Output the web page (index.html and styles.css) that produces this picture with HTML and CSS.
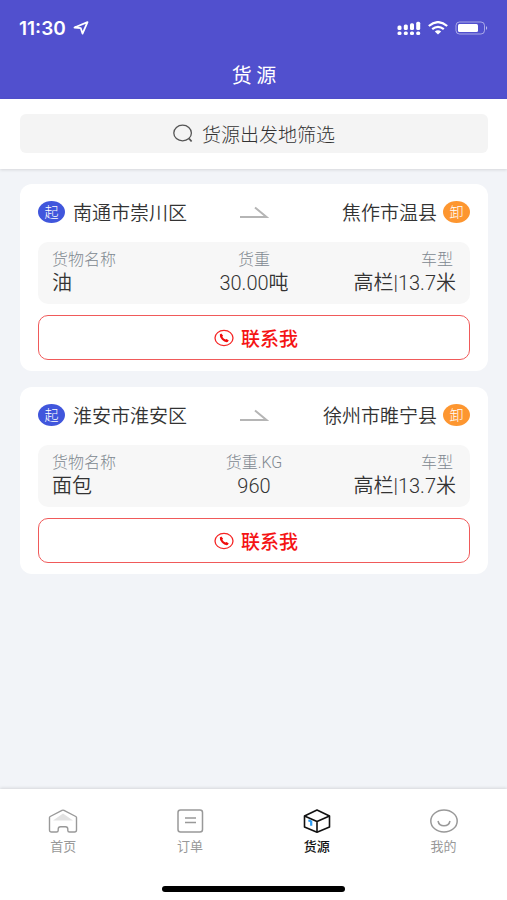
FILE: index.html
```
<!DOCTYPE html>
<html lang="zh-CN">
<head>
    <meta charset="UTF-8">
    <meta name="viewport" content="width=device-width, initial-scale=1.0">
    <title>货源</title>
    <link rel="stylesheet" href="styles.css">
</head>
<body>
    <header class="header">
        <div class="status">
            <span class="time">11:30</span>
            <svg class="locate" width="16" height="14" viewBox="0 0 16 14">
                <path d="M1.5 6.5L14.5 1.2L9.5 12.6L7.8 7.2Z" fill="none" stroke="#fff" stroke-width="1.8" stroke-linejoin="round"/>
            </svg>
            <svg width="24" height="14" viewBox="0 0 24 14" fill="#fff">
                <rect x="0.5" y="4.5" width="4" height="4.5" rx="1.5"/>
                <rect x="6.8" y="3.5" width="4" height="5.5" rx="1.5"/>
                <rect x="13" y="2.2" width="4" height="6.8" rx="1.5"/>
                <rect x="19.2" y="0.8" width="4" height="8.2" rx="1.5"/>
                <rect x="0.5" y="10.5" width="4" height="3.5" rx="1.5"/>
                <rect x="6.8" y="10.5" width="4" height="3.5" rx="1.5"/>
                <rect x="13" y="10.5" width="4" height="3.5" rx="1.5"/>
                <rect x="19.2" y="10.5" width="4" height="3.5" rx="1.5"/>
            </svg>
            <svg width="20" height="14" viewBox="0 0 20 14" fill="none" stroke="#fff" stroke-width="2.2">
                <path d="M0.8 5Q10 -2.8 19.2 5"/>
                <path d="M4.2 8.2Q10 3.4 15.8 8.2"/>
                <path d="M6.8 10.4Q10 8 13.2 10.4L10 13.4Z" fill="#fff" stroke="none"/>
            </svg>
            <svg width="34" height="14" viewBox="0 0 34 14">
                <rect x="1" y="1" width="28.5" height="12" rx="3.5" fill="none" stroke="#fff" stroke-opacity="0.5"/>
                <rect x="3" y="3" width="20" height="8" rx="1.5" fill="#fff"/>
                <path d="M31 5Q33.4 7 31 9Z" fill="#fff" fill-opacity="0.6"/>
            </svg>
        </div>
        <h1>货 源</h1>
    </header>

    <div class="filter">
        <button class="filter-button">
            <svg width="20" height="19" viewBox="0 0 20 19" fill="none" stroke="#555" stroke-width="1.3">
                <ellipse cx="9.6" cy="9" rx="8.8" ry="7.9"/>
                <path d="M16 14.5L18.6 17.5" stroke-width="1.8"/>
            </svg>
            货源出发地筛选
        </button>
    </div>

    <main class="list">
        <article class="card">
            <div class="route">
                <div class="place"><span class="badge start">起</span>南通市崇川区</div>
                <svg width="30" height="14" viewBox="0 0 30 14" fill="none" stroke="#b5b5b5" stroke-width="2">
                    <path d="M1 12H27.5L16 2.5"/>
                </svg>
                <div class="place end">焦作市温县<span class="badge unload">卸</span></div>
            </div>
            <dl class="info">
                <div>
                    <dt>货物名称</dt>
                    <dd>油</dd>
                </div>
                <div>
                    <dt>货重</dt>
                    <dd>30.00吨</dd>
                </div>
                <div>
                    <dt>车型</dt>
                    <dd>高栏|13.7米</dd>
                </div>
            </dl>
            <button class="contact">
                <svg width="20" height="18" viewBox="0 0 20 18">
                    <ellipse cx="10" cy="9" rx="9" ry="7.6" fill="none" stroke="#f52525" stroke-width="1.3"/>
                    <path d="M5.8 5.6L7.3 4.5L9.1 6.8L8.3 7.8Q9.5 9.7 11.5 10.6L12.6 9.9L14.8 11.6L13.6 13.1Q10.8 13.7 8 10.8Q5.4 8.2 5.8 5.6Z" fill="#f00b0b"/>
                </svg>
                联系我
            </button>
        </article>

        <article class="card">
            <div class="route">
                <div class="place"><span class="badge start">起</span>淮安市淮安区</div>
                <svg width="30" height="14" viewBox="0 0 30 14" fill="none" stroke="#b5b5b5" stroke-width="2">
                    <path d="M1 12H27.5L16 2.5"/>
                </svg>
                <div class="place end">徐州市睢宁县<span class="badge unload">卸</span></div>
            </div>
            <dl class="info">
                <div>
                    <dt>货物名称</dt>
                    <dd>面包</dd>
                </div>
                <div>
                    <dt>货重.KG</dt>
                    <dd>960</dd>
                </div>
                <div>
                    <dt>车型</dt>
                    <dd>高栏|13.7米</dd>
                </div>
            </dl>
            <button class="contact">
                <svg width="20" height="18" viewBox="0 0 20 18">
                    <ellipse cx="10" cy="9" rx="9" ry="7.6" fill="none" stroke="#f52525" stroke-width="1.3"/>
                    <path d="M5.8 5.6L7.3 4.5L9.1 6.8L8.3 7.8Q9.5 9.7 11.5 10.6L12.6 9.9L14.8 11.6L13.6 13.1Q10.8 13.7 8 10.8Q5.4 8.2 5.8 5.6Z" fill="#f00b0b"/>
                </svg>
                联系我
            </button>
        </article>
    </main>

    <footer class="footer">
        <nav class="tabs">
            <a href="#home">
                <svg width="30" height="24" viewBox="0 0 30 24" fill="none" stroke="#999" stroke-width="1.4" stroke-linejoin="round">
                    <path d="M5 11.5L15 4.5L25 11.5Z" fill="#e2e2e2" stroke="none"/>
                    <path d="M1.5 8.6Q1.5 7.9 2.2 7.5L14 1.4Q15 0.9 16 1.4L27.8 7.5Q28.5 7.9 28.5 8.6V21Q28.5 23 26.5 23H21.5Q19.8 23 19.8 21.5V20Q19.8 17.8 17.5 17.8H12.5Q10.2 17.8 10.2 20V21.5Q10.2 23 8.5 23H3.5Q1.5 23 1.5 21Z"/>
                </svg>
                首页
            </a>
            <a href="#orders">
                <svg width="30" height="24" viewBox="0 0 30 24" fill="none" stroke="#999" stroke-width="1.5">
                    <rect x="3" y="1" width="24.5" height="22" rx="2.5"/>
                    <path d="M10 9H21M10 13.5H21"/>
                </svg>
                订单
            </a>
            <a href="#goods" class="active">
                <svg width="30" height="24" viewBox="0 0 30 24" fill="none" stroke="#111" stroke-width="1.6" stroke-linejoin="round">
                    <path d="M15 1L27.5 7V18L15 23.2L2.5 18V7Z"/>
                    <path d="M2.5 7L15 12.5L27.5 7M15 12.5V23"/>
                    <path d="M6.4 11.2L9.2 12.4V16.8" stroke="#2b9cf5" stroke-width="2.2"/>
                </svg>
                货源
            </a>
            <a href="#mine">
                <svg width="30" height="24" viewBox="0 0 30 24" fill="none" stroke="#999" stroke-width="1.5">
                    <ellipse cx="15" cy="12" rx="13.2" ry="11"/>
                    <path d="M9 12Q10 16.8 15 16.8Q20 16.8 21 12"/>
                </svg>
                我的
            </a>
        </nav>
        <div class="home-bar"></div>
    </footer>
</body>
</html>
```
FILE: styles.css
```
* {
    box-sizing: border-box;
}
body {
    margin: 0;
    min-height: 100vh;
    display: flex;
    flex-direction: column;
    font-family: "Noto Sans CJK SC", sans-serif;
    color: #333;
    background-color: #f2f4f8;
}
svg {
    flex: none;
}
button {
    font-family: inherit;
    cursor: pointer;
}
.header {
    color: #fff;
    background-color: #5150ce;
    padding: 16px 18px 4px 19px;
}
.status {
    display: flex;
    align-items: center;
    gap: 7px;
    height: 24px;
}
.time {
    font-family: Inter, sans-serif;
    font-size: 19px;
    font-weight: 600;
}
.locate {
    margin-right: auto;
}
h1 {
    margin: 15px 0 0;
    font-size: 20px;
    font-weight: 400;
    line-height: 40px;
    text-align: center;
}
.filter {
    padding: 15px 19px 16px 20px;
    background-color: #fff;
    box-shadow: 0 1px 3px rgba(0, 0, 0, 0.12);
}
.filter-button {
    display: flex;
    align-items: center;
    justify-content: center;
    gap: 9px;
    width: 100%;
    height: 39px;
    border: none;
    border-radius: 6px;
    font-size: 19px;
    font-weight: 300;
    color: #333;
    background-color: #f4f4f4;
}
.list {
    flex: 1;
    display: flex;
    flex-direction: column;
    gap: 16px;
    padding: 15px 19px 16px 20px;
}
.card {
    padding: 14px 18px 11px;
    border-radius: 12px;
    background-color: #fff;
}
.route {
    display: grid;
    grid-template-columns: 1fr auto 1fr;
    align-items: center;
    height: 24px;
}
.place {
    display: flex;
    align-items: center;
    gap: 8px;
    font-size: 19px;
    font-weight: 350;
    white-space: nowrap;
}
.place.end {
    justify-content: flex-end;
    gap: 6px;
}
.badge {
    width: 27px;
    height: 22px;
    border-radius: 50%;
    font-size: 14px;
    font-weight: 300;
    line-height: 20px;
    text-align: center;
    color: #fff;
}
.start {
    background-color: #4056dc;
}
.unload {
    background-color: #fd9630;
}
.info {
    display: grid;
    grid-template-columns: 1fr 1fr 1fr;
    margin: 20px 0 11px;
    padding: 8px 14px;
    border-radius: 10px;
    background-color: #f7f7f7;
    font-family: Roboto, "Noto Sans CJK SC", sans-serif;
    text-align: center;
}
.info div:first-child {
    text-align: left;
}
.info div:last-child {
    text-align: right;
}
.info div:last-child dt {
    padding-right: 3px;
}
dt {
    font-size: 16px;
    font-weight: 300;
    line-height: 20px;
    color: #808890;
}
dd {
    margin: 0;
    font-size: 20px;
    font-weight: 350;
    line-height: 26px;
    white-space: nowrap;
}
.contact {
    display: flex;
    align-items: center;
    justify-content: center;
    gap: 7px;
    width: 100%;
    height: 45px;
    padding: 0 4px 0 8px;
    border: 1px solid #f05a5a;
    border-radius: 10px;
    font-size: 19px;
    font-weight: 500;
    color: #f51414;
    background-color: #fff;
}
.footer {
    padding: 20px 0 8px;
    background-color: #fff;
    box-shadow: 0 -1px 3px rgba(0, 0, 0, 0.12);
}
.tabs {
    display: grid;
    grid-template-columns: repeat(4, 1fr);
}
.tabs a {
    display: flex;
    flex-direction: column;
    align-items: center;
    gap: 3px;
    font-size: 13px;
    line-height: 20px;
    color: #999;
    text-decoration: none;
}
.tabs .active {
    font-weight: 500;
    color: #111;
}
.home-bar {
    width: 36%;
    height: 6px;
    margin: 30px auto 0;
    border-radius: 3px;
    background-color: #000;
}
```
